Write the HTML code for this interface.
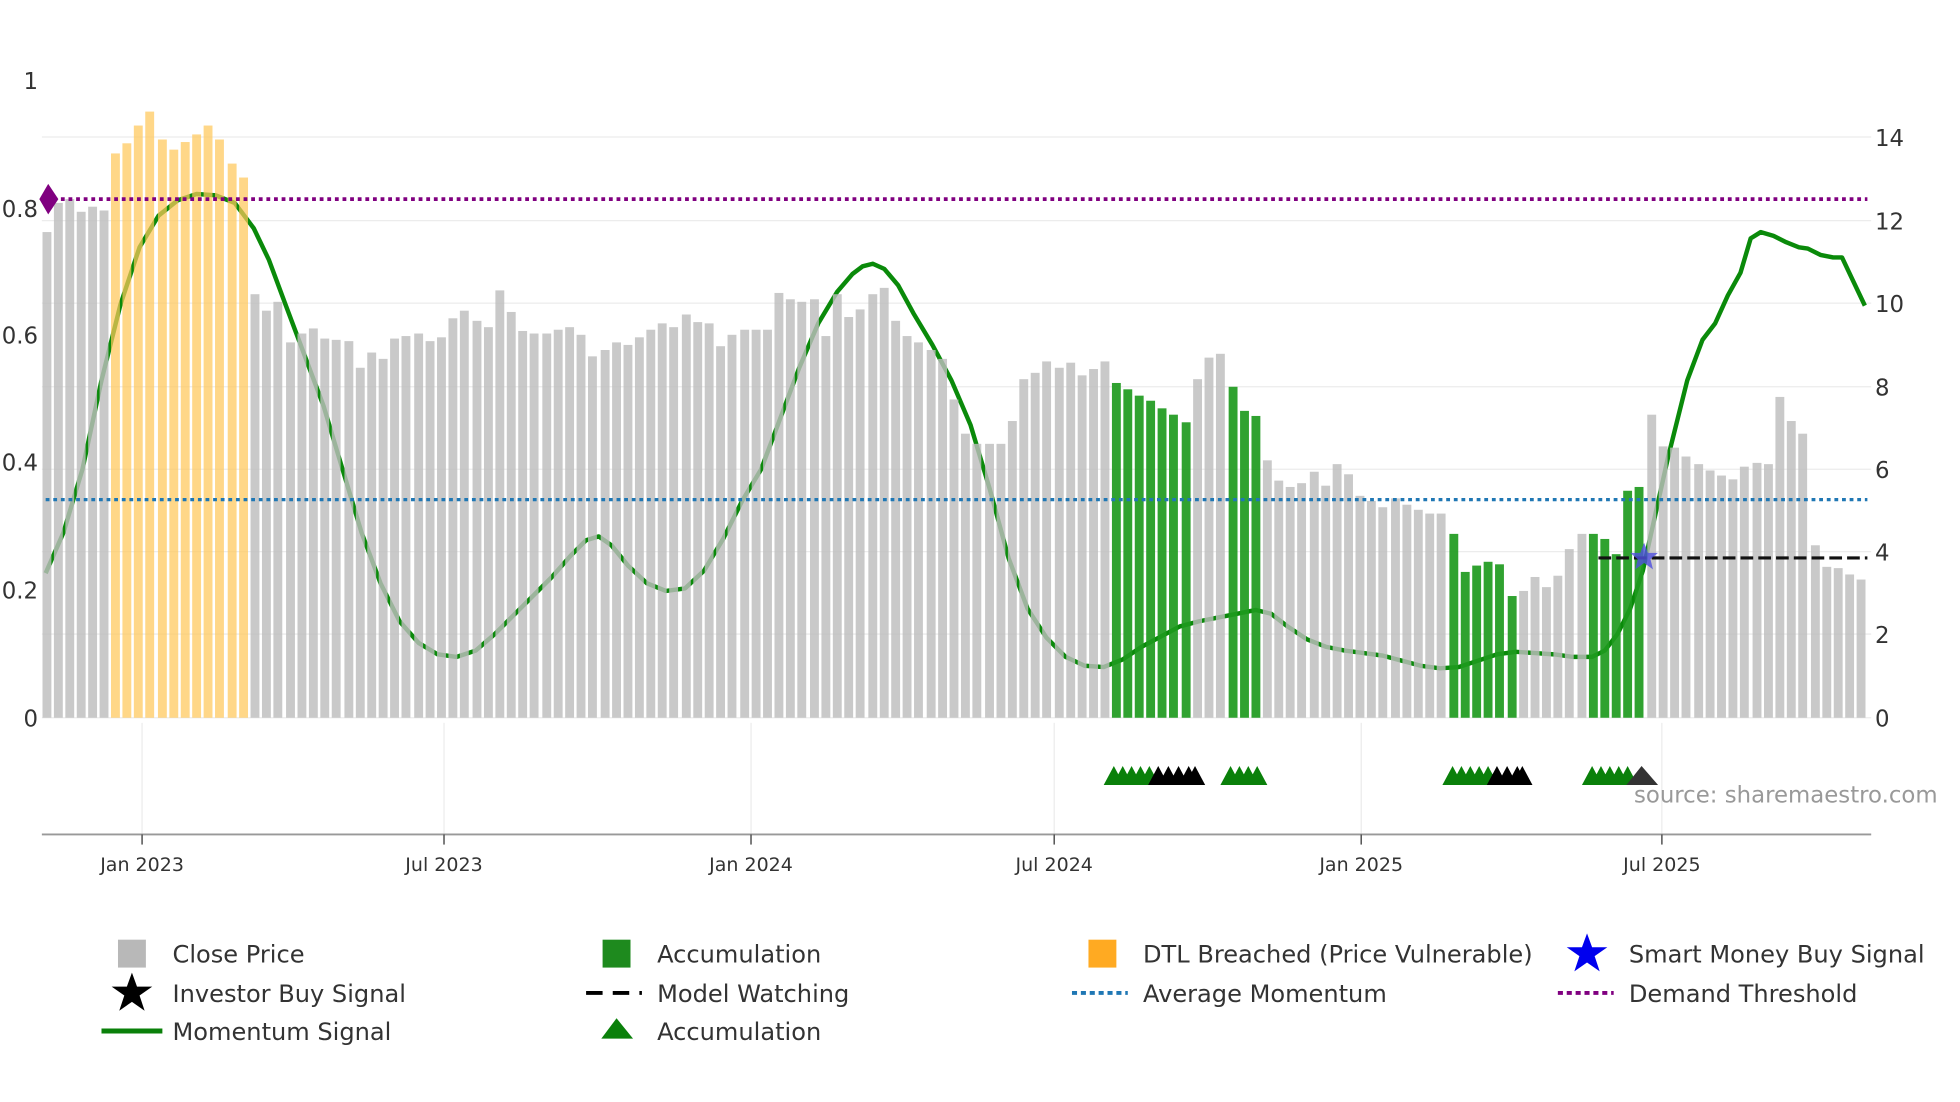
<!DOCTYPE html>
<html><head><meta charset="utf-8"><style>
html,body{margin:0;padding:0;background:#fff;}
svg{display:block;}
text{font-family:"DejaVu Sans","Liberation Sans",sans-serif;}
</style></head><body>
<svg width="1960" height="1102" viewBox="0 0 1545 869" preserveAspectRatio="none">
<rect width="1545" height="869" fill="#fff"/>
<g stroke="#ececec" stroke-width="1">
<line x1="33" x2="1475" y1="108" y2="108"/><line x1="33" x2="1475" y1="174" y2="174"/>
<line x1="33" x2="1475" y1="239" y2="239"/><line x1="33" x2="1475" y1="305" y2="305"/>
<line x1="33" x2="1475" y1="370" y2="370"/><line x1="33" x2="1475" y1="435" y2="435"/>
<line x1="33" x2="1475" y1="500" y2="500"/><line x1="33" x2="1475" y1="566" y2="566"/>
<line x1="112" x2="112" y1="570" y2="658"/><line x1="350" x2="350" y1="570" y2="658"/>
<line x1="592" x2="592" y1="570" y2="658"/><line x1="831" x2="831" y1="570" y2="658"/>
<line x1="1073" x2="1073" y1="570" y2="658"/><line x1="1310" x2="1310" y1="570" y2="658"/>
</g>
<polyline fill="none" stroke="#0a8a0a" stroke-width="3.5" stroke-linejoin="round" points="36,452 50,420 65,370 80,300 95,240 110,195 125,170 140,158 155,153 170,154 185,160 200,180 212,205 225,240 240,280 255,320 270,370 285,420 300,460 315,490 330,507 345,516 360,518 375,513 390,500 405,485 420,470 435,455 450,438 462,426 472,423 482,430 495,446 510,460 525,466 540,464 555,450 570,425 585,395 600,370 615,330 630,290 645,255 660,230 672,216 680,210 688,208 697,212 708,225 720,247 735,272 750,300 765,335 780,385 795,440 810,480 825,503 840,518 855,525 870,526 885,520 900,510 915,502 930,494 945,490 960,487 975,484 990,481 1002,484 1015,494 1030,504 1045,510 1060,513 1075,515 1090,517 1105,521 1120,525 1135,527 1150,526 1165,521 1180,516 1195,514 1210,515 1225,516 1240,518 1255,518 1265,513 1275,500 1285,480 1295,450 1305,405 1315,360 1330,300 1342,268 1352,255 1362,233 1372,215 1380,188 1388,183 1398,186 1408,191 1418,195 1425,196 1435,201 1445,203 1452,203 1460,220 1470,241"/>
<g fill="#bdbdbd" fill-opacity="0.82">
<rect x="33.5" y="183" width="7" height="383"/><rect x="42.5" y="160" width="7" height="406"/><rect x="51.5" y="157" width="7" height="409"/><rect x="60.5" y="167" width="7" height="399"/><rect x="69.5" y="163" width="7" height="403"/><rect x="78.5" y="166" width="7" height="400"/>
<rect x="197.5" y="232" width="7" height="334"/><rect x="206.5" y="245" width="7" height="321"/><rect x="215.5" y="238" width="7" height="328"/><rect x="225.5" y="270" width="7" height="296"/><rect x="234.5" y="263" width="7" height="303"/><rect x="243.5" y="259" width="7" height="307"/><rect x="252.5" y="267" width="7" height="299"/><rect x="261.5" y="268" width="7" height="298"/><rect x="271.5" y="269" width="7" height="297"/><rect x="280.5" y="290" width="7" height="276"/><rect x="289.5" y="278" width="7" height="288"/><rect x="298.5" y="283" width="7" height="283"/><rect x="307.5" y="267" width="7" height="299"/><rect x="316.5" y="265" width="7" height="301"/><rect x="326.5" y="263" width="7" height="303"/><rect x="335.5" y="269" width="7" height="297"/><rect x="344.5" y="266" width="7" height="300"/><rect x="353.5" y="251" width="7" height="315"/><rect x="362.5" y="245" width="7" height="321"/><rect x="372.5" y="253" width="7" height="313"/><rect x="381.5" y="258" width="7" height="308"/><rect x="390.5" y="229" width="7" height="337"/><rect x="399.5" y="246" width="7" height="320"/><rect x="408.5" y="261" width="7" height="305"/><rect x="417.5" y="263" width="7" height="303"/><rect x="427.5" y="263" width="7" height="303"/><rect x="436.5" y="260" width="7" height="306"/><rect x="445.5" y="258" width="7" height="308"/><rect x="454.5" y="264" width="7" height="302"/><rect x="463.5" y="281" width="7" height="285"/><rect x="473.5" y="276" width="7" height="290"/><rect x="482.5" y="270" width="7" height="296"/><rect x="491.5" y="272" width="7" height="294"/><rect x="500.5" y="266" width="7" height="300"/><rect x="509.5" y="260" width="7" height="306"/><rect x="518.5" y="255" width="7" height="311"/><rect x="527.5" y="258" width="7" height="308"/><rect x="537.5" y="248" width="7" height="318"/><rect x="546.5" y="254" width="7" height="312"/><rect x="555.5" y="255" width="7" height="311"/><rect x="564.5" y="273" width="7" height="293"/><rect x="573.5" y="264" width="7" height="302"/><rect x="583.5" y="260" width="7" height="306"/><rect x="592.5" y="260" width="7" height="306"/><rect x="601.5" y="260" width="7" height="306"/><rect x="610.5" y="231" width="7" height="335"/><rect x="619.5" y="236" width="7" height="330"/><rect x="628.5" y="238" width="7" height="328"/><rect x="638.5" y="236" width="7" height="330"/><rect x="647.5" y="265" width="7" height="301"/><rect x="656.5" y="232" width="7" height="334"/><rect x="665.5" y="250" width="7" height="316"/><rect x="674.5" y="244" width="7" height="322"/><rect x="684.5" y="232" width="7" height="334"/><rect x="693.5" y="227" width="7" height="339"/><rect x="702.5" y="253" width="7" height="313"/><rect x="711.5" y="265" width="7" height="301"/><rect x="720.5" y="270" width="7" height="296"/><rect x="730.5" y="276" width="7" height="290"/><rect x="739.5" y="283" width="7" height="283"/><rect x="748.5" y="315" width="7" height="251"/><rect x="757.5" y="342" width="7" height="224"/><rect x="766.5" y="350" width="7" height="216"/><rect x="776.5" y="350" width="7" height="216"/><rect x="785.5" y="350" width="7" height="216"/><rect x="794.5" y="332" width="7" height="234"/><rect x="803.5" y="299" width="7" height="267"/><rect x="812.5" y="294" width="7" height="272"/><rect x="821.5" y="285" width="7" height="281"/><rect x="831.5" y="290" width="7" height="276"/><rect x="840.5" y="286" width="7" height="280"/><rect x="849.5" y="296" width="7" height="270"/><rect x="858.5" y="291" width="7" height="275"/><rect x="867.5" y="285" width="7" height="281"/>
<rect x="940.5" y="299" width="7" height="267"/><rect x="949.5" y="282" width="7" height="284"/><rect x="958.5" y="279" width="7" height="287"/>
<rect x="995.5" y="363" width="7" height="203"/><rect x="1004.5" y="379" width="7" height="187"/><rect x="1013.5" y="384" width="7" height="182"/><rect x="1022.5" y="381" width="7" height="185"/><rect x="1032.5" y="372" width="7" height="194"/><rect x="1041.5" y="383" width="7" height="183"/><rect x="1050.5" y="366" width="7" height="200"/><rect x="1059.5" y="374" width="7" height="192"/><rect x="1068.5" y="391" width="7" height="175"/><rect x="1077.5" y="395" width="7" height="171"/><rect x="1086.5" y="400" width="7" height="166"/><rect x="1096.5" y="393" width="7" height="173"/><rect x="1105.5" y="398" width="7" height="168"/><rect x="1114.5" y="402" width="7" height="164"/><rect x="1123.5" y="405" width="7" height="161"/><rect x="1132.5" y="405" width="7" height="161"/>
<rect x="1197.5" y="466" width="7" height="100"/><rect x="1206.5" y="455" width="7" height="111"/><rect x="1215.5" y="463" width="7" height="103"/><rect x="1224.5" y="454" width="7" height="112"/><rect x="1233.5" y="433" width="7" height="133"/><rect x="1243.5" y="421" width="7" height="145"/>
<rect x="1298.5" y="327" width="7" height="239"/><rect x="1307.5" y="352" width="7" height="214"/><rect x="1316.5" y="353" width="7" height="213"/><rect x="1325.5" y="360" width="7" height="206"/><rect x="1335.5" y="366" width="7" height="200"/><rect x="1344.5" y="371" width="7" height="195"/><rect x="1353.5" y="375" width="7" height="191"/><rect x="1362.5" y="378" width="7" height="188"/><rect x="1371.5" y="368" width="7" height="198"/><rect x="1381.5" y="365" width="7" height="201"/><rect x="1390.5" y="366" width="7" height="200"/><rect x="1399.5" y="313" width="7" height="253"/><rect x="1408.5" y="332" width="7" height="234"/><rect x="1417.5" y="342" width="7" height="224"/><rect x="1427.5" y="430" width="7" height="136"/><rect x="1436.5" y="447" width="7" height="119"/><rect x="1445.5" y="448" width="7" height="118"/><rect x="1454.5" y="453" width="7" height="113"/><rect x="1463.5" y="457" width="7" height="109"/>
</g>
<g fill="#ffc85a" fill-opacity="0.72">
<rect x="87.5" y="121" width="7" height="445"/><rect x="96.5" y="113" width="7" height="453"/><rect x="105.5" y="99" width="7" height="467"/><rect x="114.5" y="88" width="7" height="478"/><rect x="124.5" y="110" width="7" height="456"/><rect x="133.5" y="118" width="7" height="448"/><rect x="142.5" y="112" width="7" height="454"/><rect x="151.5" y="106" width="7" height="460"/><rect x="160.5" y="99" width="7" height="467"/><rect x="169.5" y="110" width="7" height="456"/><rect x="179.5" y="129" width="7" height="437"/><rect x="188.5" y="140" width="7" height="426"/>
</g>
<g fill="#1e9a1e" fill-opacity="0.92">
<rect x="876.5" y="302" width="7" height="264"/><rect x="885.5" y="307" width="7" height="259"/><rect x="894.5" y="312" width="7" height="254"/><rect x="903.5" y="316" width="7" height="250"/><rect x="912.5" y="322" width="7" height="244"/><rect x="921.5" y="327" width="7" height="239"/><rect x="931.5" y="333" width="7" height="233"/>
<rect x="968.5" y="305" width="7" height="261"/><rect x="977.5" y="324" width="7" height="242"/><rect x="986.5" y="328" width="7" height="238"/>
<rect x="1142.5" y="421" width="7" height="145"/><rect x="1151.5" y="451" width="7" height="115"/><rect x="1160.5" y="446" width="7" height="120"/><rect x="1169.5" y="443" width="7" height="123"/><rect x="1178.5" y="445" width="7" height="121"/><rect x="1188.5" y="470" width="7" height="96"/>
<rect x="1252.5" y="421" width="7" height="145"/><rect x="1261.5" y="425" width="7" height="141"/><rect x="1270.5" y="437" width="7" height="129"/><rect x="1279.5" y="387" width="7" height="179"/><rect x="1288.5" y="384" width="7" height="182"/>
</g>
<line x1="36" x2="1472" y1="157" y2="157" stroke="#800080" stroke-width="3" stroke-dasharray="3,3"/>
<line x1="36" x2="1472" y1="394" y2="394" stroke="#1f77b4" stroke-width="2.5" stroke-dasharray="3,3"/>
<line x1="1260" x2="1472" y1="440" y2="440" stroke="#111" stroke-width="2.5" stroke-dasharray="10,4"/>
<path d="M38,145 L46,157 L38,169 L31,157 Z" fill="#800080"/>
<path d="M1296,428 l3,8 8,0 -6,5 2,8 -7,-5 -7,5 2,-8 -6,-5 8,0z" fill="#5050e0" fill-opacity="0.8"/>
<g fill="#0a800a">
<path d="M870,619 l8,-15 8,15z M877,619 l8,-15 8,15z M884,619 l8,-15 8,15z M891,619 l8,-15 8,15z M898,619 l8,-15 8,15z"/>
<path d="M962,619 l8,-15 8,15z M969,619 l8,-15 8,15z M976,619 l8,-15 8,15z M983,619 l8,-15 8,15z"/>
<path d="M1137,619 l8,-15 8,15z M1144,619 l8,-15 8,15z M1151,619 l8,-15 8,15z M1158,619 l8,-15 8,15z M1165,619 l8,-15 8,15z"/>
<path d="M1247,619 l8,-15 8,15z M1254,619 l8,-15 8,15z M1261,619 l8,-15 8,15z M1268,619 l8,-15 8,15z M1275,619 l8,-15 8,15z"/>
</g>
<g fill="#000">
<path d="M905,619 l8,-15 8,15z M913,619 l8,-15 8,15z M921,619 l8,-15 8,15z M929,619 l8,-15 8,15z M934,619 l8,-15 8,15z"/>
<path d="M1172,619 l8,-15 8,15z M1180,619 l8,-15 8,15z M1188,619 l8,-15 8,15z M1192,619 l8,-15 8,15z"/>
</g>
<path d="M1282,619 l12,-15 13,15z" fill="#333"/>
<text x="1288" y="633" font-size="18" fill="#999">source: sharemaestro.com</text>
<line x1="33" x2="1475" y1="658" y2="658" stroke="#999" stroke-width="1.5"/>
<g stroke="#555" stroke-width="1.2">
<line x1="112" x2="112" y1="658" y2="666"/><line x1="350" x2="350" y1="658" y2="666"/><line x1="592" x2="592" y1="658" y2="666"/><line x1="831" x2="831" y1="658" y2="666"/><line x1="1073" x2="1073" y1="658" y2="666"/><line x1="1310" x2="1310" y1="658" y2="666"/>
</g>
<g font-size="15" fill="#333" text-anchor="middle">
<text x="112" y="687">Jan 2023</text><text x="350" y="687">Jul 2023</text><text x="592" y="687">Jan 2024</text><text x="831" y="687">Jul 2024</text><text x="1073" y="687">Jan 2025</text><text x="1310" y="687">Jul 2025</text>
</g>
<g font-size="18" fill="#333" text-anchor="end">
<text x="30" y="70">1</text><text x="30" y="171">0.8</text><text x="30" y="271">0.6</text><text x="30" y="371">0.4</text><text x="30" y="472">0.2</text><text x="30" y="573">0</text>
</g>
<g font-size="18" fill="#333">
<text x="1478" y="115">14</text><text x="1478" y="181">12</text><text x="1478" y="246">10</text><text x="1478" y="312">8</text><text x="1478" y="377">6</text><text x="1478" y="442">4</text><text x="1478" y="507">2</text><text x="1478" y="573">0</text>
</g>
<g font-size="19" fill="#333">
<rect x="93" y="741" width="22" height="22" fill="#b8b8b8"/><text x="136" y="759">Close Price</text>
<rect x="475" y="741" width="22" height="22" fill="#1e8a1e"/><text x="518" y="759">Accumulation</text>
<rect x="858" y="741" width="22" height="22" fill="#ffaa22"/><text x="901" y="759">DTL Breached (Price Vulnerable)</text>
<path d="M1251,736 l4,11 12,0 -10,7 4,12 -10,-7 -10,7 4,-12 -10,-7 12,0z" fill="#0000ee"/><text x="1284" y="759">Smart Money Buy Signal</text>
<path d="M104,767 l4,11 12,0 -10,7 4,12 -10,-7 -10,7 4,-12 -10,-7 12,0z" fill="#000"/><text x="136" y="790">Investor Buy Signal</text>
<line x1="462" x2="506" y1="783" y2="783" stroke="#000" stroke-width="3" stroke-dasharray="13,8"/><text x="518" y="790">Model Watching</text>
<line x1="845" x2="889" y1="783" y2="783" stroke="#1f77b4" stroke-width="3" stroke-dasharray="4,3"/><text x="901" y="790">Average Momentum</text>
<line x1="1228" x2="1272" y1="783" y2="783" stroke="#800080" stroke-width="3" stroke-dasharray="4,3"/><text x="1284" y="790">Demand Threshold</text>
<line x1="80" x2="128" y1="813" y2="813" stroke="#0a800a" stroke-width="4"/><text x="136" y="820">Momentum Signal</text>
<path d="M474,819 l12,-16 13,16z" fill="#0a800a"/><text x="518" y="820">Accumulation</text>
</g>
</svg>
</body></html>
